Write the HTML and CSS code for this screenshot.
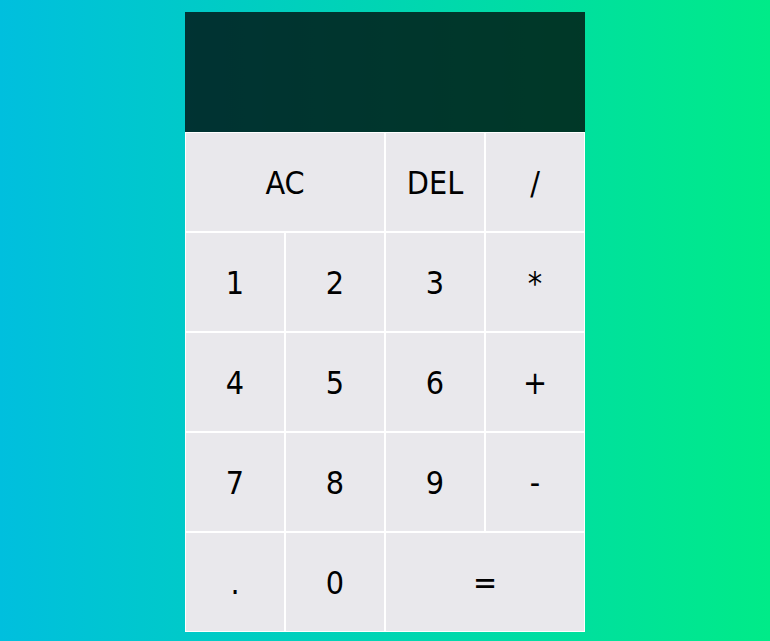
FILE: index.html
```html
<!DOCTYPE html>
<html>
<head>
<meta charset="utf-8">
<link rel="stylesheet" href="styles.css">
</head>
<body>
<div class="calculator-grid">
  <div class="output">
    <div class="previous-operand"></div>
    <div class="current-operand"></div>
  </div>
  <button class="span-two">AC</button>
  <button>DEL</button>
  <button>/</button>
  <button>1</button>
  <button>2</button>
  <button>3</button>
  <button>*</button>
  <button>4</button>
  <button>5</button>
  <button>6</button>
  <button>+</button>
  <button>7</button>
  <button>8</button>
  <button>9</button>
  <button>-</button>
  <button>.</button>
  <button>0</button>
  <button class="span-two">=</button>
</div>
</body>
</html>
```
FILE: styles.css
```css
*, *::before, *::after {
  box-sizing: border-box;
}

html, body {
  margin: 0;
  height: 100%;
  overflow: hidden;
}

body {
  background: linear-gradient(to right, #00bfde, #00eb88);
  font-family: "DejaVu Sans Condensed", "DejaVu Sans", sans-serif;
  font-stretch: condensed;
}

.calculator-grid {
  display: grid;
  justify-content: center;
  grid-template-columns: repeat(4, 100px);
  grid-template-rows: 120px repeat(5, 100px);
  padding-top: 12px;
}

.calculator-grid > button {
  cursor: pointer;
  font-family: inherit;
  font-stretch: condensed;
  font-size: 32px;
  color: #000;
  border: 1px solid #fff;
  outline: none;
  background-color: #e9e8ec;
  padding: 2px 0 0 0;
  margin: 0;
}

.span-two {
  grid-column: span 2;
}

.output {
  grid-column: 1 / -1;
  background-color: rgba(0, 0, 0, 0.75);
}
```
